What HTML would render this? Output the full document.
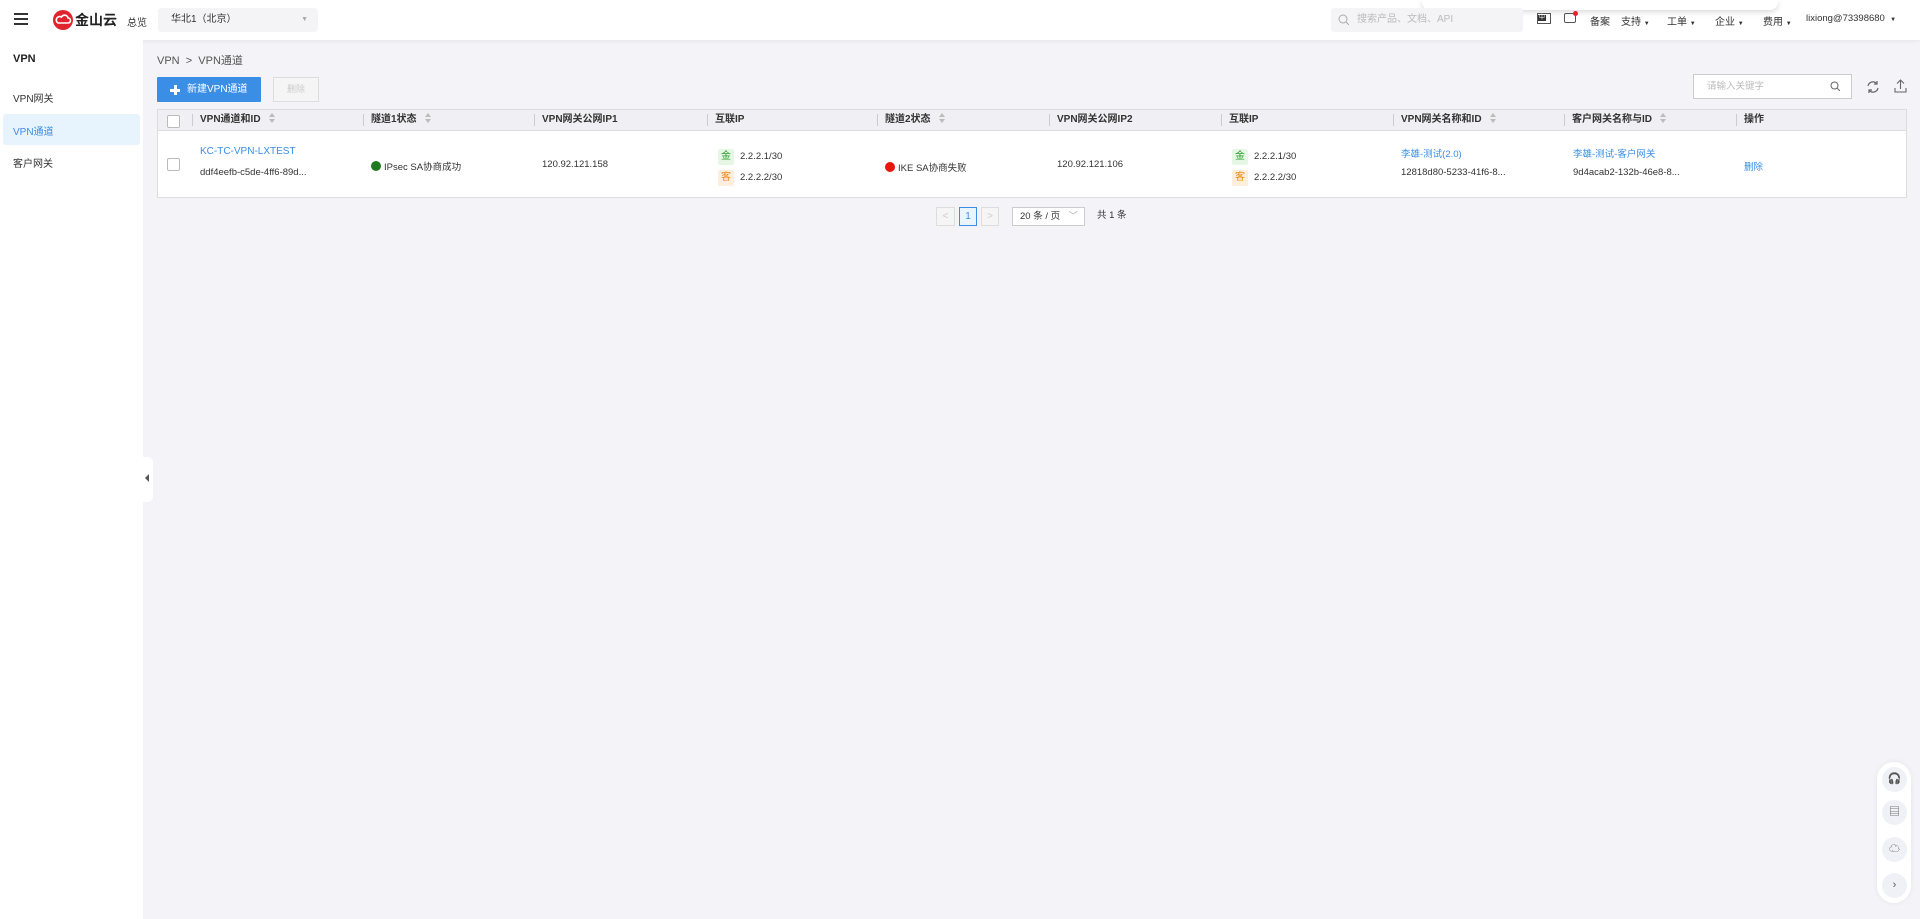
<!DOCTYPE html>
<html><head><meta charset="utf-8"><style>
*{margin:0;padding:0;box-sizing:border-box}
body{width:1920px;height:919px;background:#f3f3f8;font-family:"Liberation Sans","Noto Sans CJK SC",sans-serif;font-size:12px;color:#333;position:relative;overflow:hidden}
.a{position:absolute}
.top{left:0;top:0;width:1920px;height:40px;background:#fff;box-shadow:0 1px 4px rgba(0,0,0,.06)}
.side{left:0;top:40px;width:143px;height:879px;background:#fff}
.blue{color:#3a8ee6}
.th{top:109px;height:22px;line-height:22px;font-size:10px;color:#333;font-weight:600}
.dv{top:114px;width:1px;height:12px;background:#ccc}
.sort{display:inline-block;margin-left:8px;vertical-align:-1px}
.badge{display:inline-block;width:16px;height:16px;border-radius:2px;text-align:center;line-height:16px;font-size:10px;margin-right:6px}
.g{background:#e6f7e6;color:#2a9d2a}.o{background:#fdeedd;color:#f08a1a}
.cb{width:13px;height:13px;border:1px solid #bbb;background:#fff;border-radius:2px}
.fb{width:25px;height:25px;border-radius:50%;background:#f0f1f6;left:1882px;text-align:center;line-height:25px;font-size:11px;color:#555}
.d{font-size:9.5px}
.nav{top:13px;font-size:10px;color:#333}
</style></head><body>
<div class="a top"></div>
<div class="a" style="left:14px;top:13px;width:14px;height:2px;background:#333;box-shadow:0 5px 0 #333,0 10px 0 #333"></div>
<svg class="a" style="left:53px;top:10px" width="20" height="20" viewBox="0 0 20 20"><circle cx="10" cy="10" r="10" fill="#e0242d"/><path d="M5 13h10a2.5 2.5 0 0 0 0-5 3.5 3.5 0 0 0-6.5-1A3 3 0 0 0 5 13z" fill="none" stroke="#fff" stroke-width="1.6"/></svg>
<div class="a" style="left:75px;top:11px;font-size:14px;font-weight:bold;color:#222;line-height:18px">金山云</div>
<div class="a" style="left:127px;top:14px;font-size:10px;color:#333">总览</div>
<div class="a" style="left:158px;top:8px;width:160px;height:24px;background:#f4f4f6;border-radius:3px;font-size:10px;line-height:24px;padding-left:13px;color:#333">华北1（北京）<span style="position:absolute;right:10px;color:#aaa;font-size:7px">▼</span></div>
<div class="a" style="left:1422px;top:0;width:356px;height:10px;background:#fff;border-radius:0 0 8px 8px;box-shadow:0 2px 6px rgba(0,0,0,.15)"></div>
<div class="a" style="left:1331px;top:8px;width:192px;height:24px;background:#f4f4f6;border-radius:3px;font-size:10px;line-height:24px;color:#bbb;padding-left:26px">搜索产品、文档、API</div>
<svg class="a" style="left:1338px;top:14px" width="11" height="11"><circle cx="5" cy="5" r="4" fill="none" stroke="#aaa"/><path d="M8 8l3 3" stroke="#aaa"/></svg>
<div class="a" style="left:1537px;top:13px;width:14px;height:11px;border:1px solid #555;font-size:6px;line-height:9px;background:#fff"><span style="background:#333;color:#fff;padding:0 1px">中</span></div>
<div class="a" style="left:1564px;top:13px;width:12px;height:10px;border:1px solid #555;border-radius:2px"></div><div class="a" style="left:1573px;top:11px;width:5px;height:5px;border-radius:50%;background:#e0242d"></div>
<div class="a nav" style="left:1590px">备案</div>
<div class="a nav" style="left:1621px">支持 <span style="font-size:6px">▼</span></div>
<div class="a nav" style="left:1667px">工单 <span style="font-size:6px">▼</span></div>
<div class="a nav" style="left:1715px">企业 <span style="font-size:6px">▼</span></div>
<div class="a nav" style="left:1763px">费用 <span style="font-size:6px">▼</span></div>
<div class="a nav" style="left:1806px;font-size:9.5px">lixiong@73398680 &nbsp;<span style="font-size:6px">▼</span></div>

<div class="a side"></div>
<div class="a" style="left:13px;top:53px;font-weight:bold;font-size:11px;color:#222">VPN</div>
<div class="a" style="left:13px;top:90px;font-size:10px">VPN网关</div>
<div class="a" style="left:3px;top:114px;width:137px;height:31px;background:#e8f4fd;border-radius:3px"></div>
<div class="a blue" style="left:13px;top:123px;font-size:10px">VPN通道</div>
<div class="a" style="left:13px;top:155px;font-size:10px">客户网关</div>
<div class="a" style="left:143px;top:457px;width:10px;height:45px;background:#fff;border-radius:0 5px 5px 0"></div>
<div class="a" style="left:145px;top:474px;width:0;height:0;border:4px solid transparent;border-right:4px solid #555;border-left:0"></div>

<div class="a" style="left:157px;top:52px;font-size:11px;color:#555">VPN &nbsp;&gt;&nbsp; VPN通道</div>
<div class="a" style="left:157px;top:77px;width:104px;height:25px;background:#3a8ee6;border-radius:1px;color:#fff;font-size:10px;line-height:25px;padding-left:30px">新建VPN通道</div>
<div class="a" style="left:170px;top:85px;width:10px;height:10px;background:linear-gradient(#fff,#fff) center/10px 3px no-repeat,linear-gradient(#fff,#fff) center/3px 10px no-repeat"></div>
<div class="a" style="left:273px;top:77px;width:46px;height:25px;border:1px solid #ddd;background:#f5f5f5;color:#ccc;font-size:9px;line-height:23px;text-align:center">删除</div>
<div class="a" style="left:1693px;top:74px;width:159px;height:25px;border:1px solid #ccc;background:#fff;font-size:9.5px;color:#bbb;line-height:23px;padding-left:13px">请输入关键字</div>
<svg class="a" style="left:1830px;top:81px" width="10" height="10"><circle cx="4.5" cy="4.5" r="3.5" fill="none" stroke="#666"/><path d="M7 7l3 3" stroke="#666"/></svg>
<svg class="a" style="left:1866px;top:80px" width="14" height="14" viewBox="0 0 14 14"><path d="M2 6a5 5 0 0 1 9-2M12 8a5 5 0 0 1-9 2" fill="none" stroke="#666" stroke-width="1.2"/><path d="M11 1v3h-3M3 13v-3h3" fill="none" stroke="#666" stroke-width="1.2"/></svg>
<svg class="a" style="left:1894px;top:79px" width="13" height="14" viewBox="0 0 13 14"><path d="M6.5 10V1M3 4.5L6.5 1 10 4.5M1 9v4h11V9" fill="none" stroke="#666" stroke-width="1.1"/></svg>

<div class="a" style="left:157px;top:109px;width:1750px;height:89px;background:#fff;border:1px solid #ddd"></div>
<div class="a" style="left:158px;top:110px;width:1748px;height:21px;background:#efeff4;border-bottom:1px solid #ddd"></div>
<div class="a cb" style="left:167px;top:115px"></div>
<div class="a cb" style="left:167px;top:158px"></div>
<svg width="0" height="0" style="position:absolute"><defs><symbol id="s" viewBox="0 0 6 10"><path d="M3 0L6 4H0zM3 10L0 6h6z" fill="#bbb"/></symbol></defs></svg>
<div class="a dv" style="left:192px"></div><div class="a th" style="left:200px">VPN通道和ID<svg class="sort" width="6" height="10"><use href="#s"/></svg></div>
<div class="a dv" style="left:363px"></div><div class="a th" style="left:371px">隧道1状态<svg class="sort" width="6" height="10"><use href="#s"/></svg></div>
<div class="a dv" style="left:534px"></div><div class="a th" style="left:542px">VPN网关公网IP1</div>
<div class="a dv" style="left:707px"></div><div class="a th" style="left:715px">互联IP</div>
<div class="a dv" style="left:877px"></div><div class="a th" style="left:885px">隧道2状态<svg class="sort" width="6" height="10"><use href="#s"/></svg></div>
<div class="a dv" style="left:1049px"></div><div class="a th" style="left:1057px">VPN网关公网IP2</div>
<div class="a dv" style="left:1221px"></div><div class="a th" style="left:1229px">互联IP</div>
<div class="a dv" style="left:1393px"></div><div class="a th" style="left:1401px">VPN网关名称和ID<svg class="sort" width="6" height="10"><use href="#s"/></svg></div>
<div class="a dv" style="left:1564px"></div><div class="a th" style="left:1572px">客户网关名称与ID<svg class="sort" width="6" height="10"><use href="#s"/></svg></div>
<div class="a dv" style="left:1736px"></div><div class="a th" style="left:1744px">操作</div>

<div class="a blue" style="left:200px;top:146px;font-size:10px">KC-TC-VPN-LXTEST</div>
<div class="a d" style="left:200px;top:167px">ddf4eefb-c5de-4ff6-89d...</div>
<div class="a d" style="left:371px;top:159px"><span style="display:inline-block;width:10px;height:10px;border-radius:50%;background:#1f7a1f;vertical-align:-1px;margin-right:3px"></span>IPsec SA协商成功</div>
<div class="a d" style="left:542px;top:159px">120.92.121.158</div>
<div class="a d" style="left:718px;top:149px"><span class="badge g">金</span>2.2.2.1/30</div>
<div class="a d" style="left:718px;top:170px"><span class="badge o">客</span>2.2.2.2/30</div>
<div class="a d" style="left:885px;top:160px"><span style="display:inline-block;width:10px;height:10px;border-radius:50%;background:#e8160c;vertical-align:-1px;margin-right:3px"></span>IKE SA协商失败</div>
<div class="a d" style="left:1057px;top:159px">120.92.121.106</div>
<div class="a d" style="left:1232px;top:149px"><span class="badge g">金</span>2.2.2.1/30</div>
<div class="a d" style="left:1232px;top:170px"><span class="badge o">客</span>2.2.2.2/30</div>
<div class="a blue d" style="left:1401px;top:146px">李雄-测试(2.0)</div>
<div class="a d" style="left:1401px;top:167px">12818d80-5233-41f6-8...</div>
<div class="a blue d" style="left:1573px;top:146px">李雄-测试-客户网关</div>
<div class="a d" style="left:1573px;top:167px">9d4acab2-132b-46e8-8...</div>
<div class="a blue d" style="left:1744px;top:159px">删除</div>

<div class="a" style="left:936px;top:207px;width:19px;height:19px;border:1px solid #ddd;background:#f5f5f5;color:#ccc;text-align:center;line-height:17px;font-size:10px">&lt;</div>
<div class="a" style="left:959px;top:207px;width:18px;height:19px;border:1px solid #3a8ee6;background:#eaf4fd;color:#3a8ee6;text-align:center;line-height:17px;font-size:10px">1</div>
<div class="a" style="left:981px;top:207px;width:18px;height:19px;border:1px solid #ddd;background:#f5f5f5;color:#ccc;text-align:center;line-height:17px;font-size:10px">&gt;</div>
<div class="a" style="left:1012px;top:207px;width:73px;height:19px;border:1px solid #ccc;background:#fff;font-size:9.5px;line-height:17px;padding-left:7px">20 条 / 页<span style="position:absolute;right:6px;color:#aaa">﹀</span></div>
<div class="a" style="left:1097px;top:207px;font-size:9.5px;line-height:17px">共 1 条</div>

<div class="a" style="left:1877px;top:762px;width:34px;height:141px;background:#fff;border-radius:17px;box-shadow:0 0 6px rgba(0,0,0,.06)"></div>
<div class="a fb" style="top:767px">🎧</div>
<div class="a fb" style="top:800px">▤</div>
<div class="a fb" style="top:837px">☁</div>
<div class="a fb" style="top:873px">›</div>
</body></html>
